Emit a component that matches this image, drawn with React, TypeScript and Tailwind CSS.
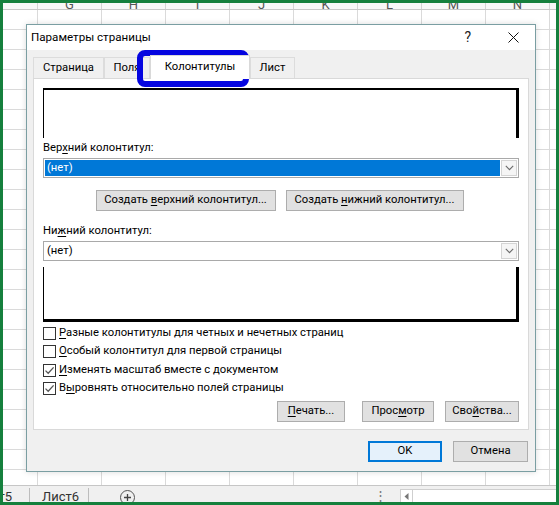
import React from 'react';

const font = "font-['Roboto','Noto_Sans',sans-serif]";

const COLS = ['', 'G', 'H', 'I', 'J', 'K', 'L', 'M', 'N'];
const ROWS = Array.from({ length: 24 }, (_, i) => i);

function U({ children }: { children: React.ReactNode }) {
  return <span className="underline underline-offset-[2px] decoration-1">{children}</span>;
}

function Btn({ className = '', primary = false, children }: { className?: string; primary?: boolean; children: React.ReactNode }) {
  return (
    <button
      className={`h-[21px] flex items-center justify-center text-[11.25px] text-black ${
        primary ? 'border-2 border-[#0078d7] bg-[#e5f1fb]' : 'border border-[#adadad] bg-[#e1e1e1]'
      } ${className}`}
    >
      {children}
    </button>
  );
}

function Check({ checked = false, children }: { checked?: boolean; children: React.ReactNode }) {
  return (
    <div className="flex items-center h-[18.5px]">
      <span className="w-[13px] h-[13px] border border-[#333] bg-white flex items-center justify-center">
        {checked && (
          <svg width="11" height="11" viewBox="0 0 11 11">
            <path d="M1.5 5.6 L4.2 8.3 L9.6 2.4" fill="none" stroke="#555" strokeWidth="1.3" />
          </svg>
        )}
      </span>
      <span className="ml-[3px] text-[11.25px] text-black">{children}</span>
    </div>
  );
}

function Select({ selected = false }: { selected?: boolean }) {
  return (
    <div className="h-[20px] border border-[#a9a9a9] bg-white flex items-stretch p-px">
      <div className={`flex-1 flex items-center pl-[2px] text-[11.25px] ${selected ? 'bg-[#0078d7] text-white' : 'text-black'}`}>
        (нет)
      </div>
      <div className="w-[16px] ml-px border border-[#d4d4d4] bg-[#f5f5f5] flex items-center justify-center">
        <svg width="9" height="6" viewBox="0 0 9 6">
          <path d="M0.8 0.8 L4.5 4.6 L8.2 0.8" fill="none" stroke="#6b6b6b" strokeWidth="1.1" />
        </svg>
      </div>
    </div>
  );
}

function Tab({ w, active = false, children }: { w: string; active?: boolean; children: React.ReactNode }) {
  return (
    <div
      className={`${w} flex items-center justify-center text-[11.25px] text-black ${
        active ? 'h-[24px] bg-white border border-b-0 border-[#d9d9d9] -mb-px relative z-10' : 'h-[21px] border border-b-0 border-[#dcdcdc] bg-[#f0f0f0]'
      }`}
    >
      {children}
    </div>
  );
}

export default function App() {
  return (
    <div className={`${font} w-[559px] h-[505px] border-[3px] border-[#15803d] relative overflow-hidden bg-white flex flex-col`}>
      {/* column headers */}
      <div className="h-[7px] flex shrink-0 border-b border-[#c8c8c8] bg-[#f8f8f8] overflow-hidden">
        {COLS.map((c, i) => (
          <div
            key={i}
            className={`${i === 0 ? 'w-[35px]' : 'w-[64px]'} shrink-0 border-r border-[#d4d4d4] flex justify-center items-end`}
          >
            <span className="text-[13px] leading-[14px] text-[#555] -mb-[3px]">{c}</span>
          </div>
        ))}
        <div className="flex-1" />
      </div>

      {/* grid */}
      <div className="flex-1 overflow-hidden">
        {ROWS.map((r) => (
          <div key={r} className="h-[20px] flex border-b border-[#dadada]">
            {COLS.map((c, i) => (
              <div key={i} className={`${i === 0 ? 'w-[35px]' : 'w-[64px]'} shrink-0 border-r border-[#dadada]`} />
            ))}
            <div className="flex-1" />
          </div>
        ))}
      </div>

      {/* sheet tabs bar */}
      <div className="h-[17px] shrink-0 bg-[#f0f0f0] border-t border-[#c6c6c6] flex items-start text-[13px] text-[#333] overflow-hidden">
        <div className="w-[26px] overflow-hidden flex justify-end pr-[17px] pt-[3px] leading-[16px] whitespace-nowrap">Лист5</div>
        <div className="w-px h-[14px] mt-[2px] bg-[#bdbdbd]" />
        <div className="ml-[12px] pt-[3px] leading-[16px]">Лист6</div>
        <div className="w-px h-[14px] mt-[2px] ml-[9px] bg-[#bdbdbd]" />
        <div className="ml-[31px] mt-[4px] w-[15px] h-[15px] rounded-full border border-[#555] flex items-center justify-center">
          <svg width="9" height="9" viewBox="0 0 9 9">
            <path d="M4.5 1 V8 M1 4.5 H8" stroke="#444" strokeWidth="1.3" />
          </svg>
        </div>
        <div className="ml-[239px] pt-[2px] leading-[16px] text-[#777]">⋮</div>
        <div className="ml-[13px] mt-[3px] w-[13px] h-[14px] bg-white border border-[#cfcfcf] flex items-center justify-center">
          <svg width="5" height="7" viewBox="0 0 5 7">
            <path d="M4.5 0 L0.5 3.5 L4.5 7 Z" fill="#777" />
          </svg>
        </div>
        <div className="flex-1 mt-[3px] h-[14px] bg-white border-t border-[#cfcfcf]" />
      </div>

      {/* dialog */}
      <div className="absolute left-[23px] top-[21px] w-[510px] h-[448px] border border-[#7a9ea2] bg-[#f0f0f0] flex flex-col shadow-[0_0_6px_rgba(0,0,0,0.15)]">
        <div className="h-[25px] bg-white flex items-center pl-[4px] shrink-0">
          <span className="text-[11.6px] text-black">Параметры страницы</span>
          <span className="ml-auto text-[14px] text-[#222] mr-[37px]">?</span>
          <svg width="11" height="11" viewBox="0 0 11 11" className="mr-[16px]">
            <path d="M0.5 0.5 L10.5 10.5 M10.5 0.5 L0.5 10.5" stroke="#111" strokeWidth="1" />
          </svg>
        </div>

        <div className="flex-1 flex flex-col px-[6px] pt-[7px] relative">
          {/* tabs */}
          <div className="flex items-end h-[21px]">
            <Tab w="w-[71px]">Страница</Tab>
            <Tab w="w-[46px]">Поля</Tab>
            <Tab w="w-[100px]" active>
              Колонтитулы
            </Tab>
            <Tab w="w-[45px]">Лист</Tab>
          </div>

          {/* panel */}
          <div className="h-[352px] bg-white border border-[#d9d9d9] px-[9px] pt-[9px] flex flex-col">
            <div className="h-[50px] border-t-2 border-l border-r-[3px] border-black" />
            <div className="mt-[2px] h-[16px] leading-[16px] text-[11.25px] text-black">
              Вер<U>х</U>ний колонтитул:
            </div>
            <div className="mt-[2px]">
              <Select selected />
            </div>
            <div className="mt-[12px] flex justify-center gap-[10px] pr-[3px]">
              <Btn className="w-[180px]">
                Создать&nbsp;<U>в</U>ерхний колонтитул...
              </Btn>
              <Btn className="w-[178px]">
                Создать&nbsp;<U>н</U>ижний колонтитул...
              </Btn>
            </div>
            <div className="mt-[12px] h-[16px] leading-[16px] text-[11.25px] text-black">
              Ни<U>ж</U>ний колонтитул:
            </div>
            <div className="mt-[2px]">
              <Select />
            </div>
            <div className="mt-[6px] h-[55px] border-l border-r-[3px] border-b-[3px] border-black" />
            <div className="mt-[2px] flex flex-col">
              <Check>
                <U>Р</U>азные колонтитулы для четных и нечетных страниц
              </Check>
              <Check>
                <U>О</U>собый колонтитул для первой страницы
              </Check>
              <Check checked>
                <U>И</U>зменять масштаб вместе с документом
              </Check>
              <Check checked>
                В<U>ы</U>ровнять относительно полей страницы
              </Check>
            </div>
            <div className="mt-[3px] flex justify-end">
              <Btn className="w-[68px]">
                <U>П</U>ечать...
              </Btn>
              <Btn className="w-[72px] ml-[17px]">
                Прос<U>м</U>отр
              </Btn>
              <Btn className="w-[74px] ml-[11px]">
                Сво<U>й</U>ства...
              </Btn>
            </div>
          </div>

          {/* OK / Cancel */}
          <div className="mt-[11px] flex justify-end pr-[1px]">
            <Btn primary className="w-[74px]">
              OK
            </Btn>
            <Btn className="w-[75px] ml-[11px]">Отмена</Btn>
          </div>

          {/* highlight around active tab */}
          <div className="absolute left-[110px] top-[0px] w-[112px] h-[37px] border-[6px] border-[#0505e0] rounded-[8px]" />
        </div>
      </div>
    </div>
  );
}
